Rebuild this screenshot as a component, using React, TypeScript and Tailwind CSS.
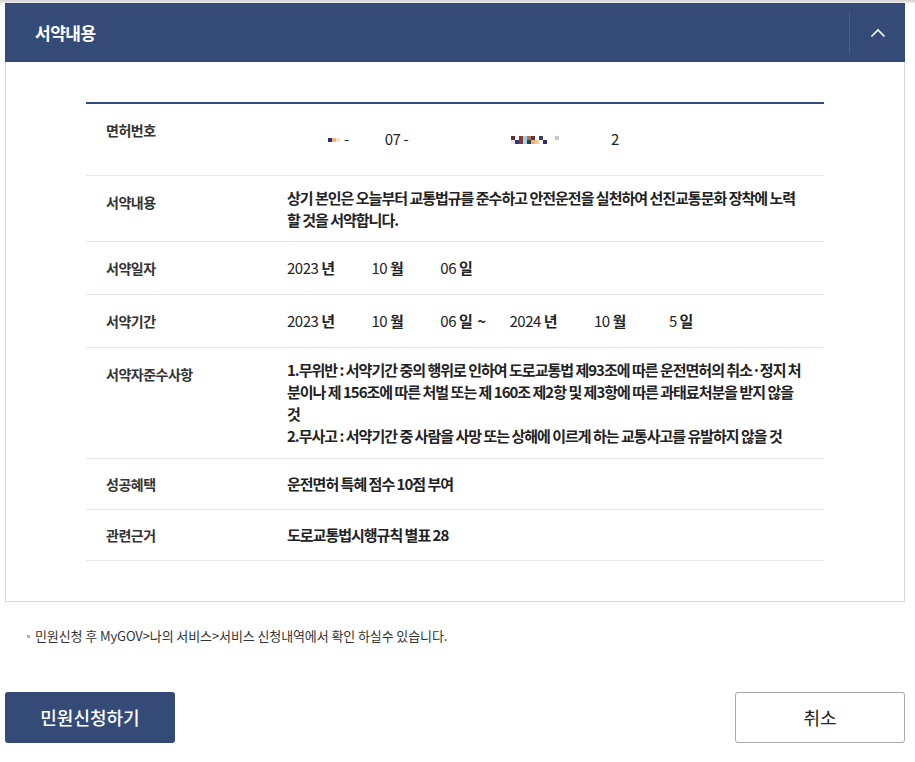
import type { ReactNode } from 'react';

const FONT = "font-['Noto_Sans_CJK_KR','Noto_Sans',sans-serif]";

// blurred (mosaic) parts of the licence number
const MOSAIC_A = [['#2b2f72', '#e9b77c', '#f5e2cc']];
const MOSAIC_B = [
  ['#5a2f3a', '#ffffff', '#8a3a2c', '#9fd0ea', '#a8764a', '#6b3040', '#ffffff', '#3a3f6a', '#ffffff', '#ffffff', '#ffffff', '#c8c8c8', '#ffffff', '#ffffff'],
  ['#f6e4e6', '#2b3b7a', '#8a3a2c', '#a9d8ee', '#2f3a4a', '#e3b36e', '#f0c890', '#ffffff', '#2b2f72', '#ffffff', '#ffffff', '#ffffff', '#ffffff', '#ffffff'],
];

function Mosaic({ cells }: { cells: string[][] }) {
  return (
    <span className="inline-flex flex-col">
      {cells.map((row, i) => (
        <span key={i} className="flex">
          {row.map((c, j) => (
            <span key={j} className="block h-[4px] w-[4px]" style={{ backgroundColor: c }} />
          ))}
        </span>
      ))}
    </span>
  );
}

function Label({ children }: { children: ReactNode }) {
  return (
    <div className="w-[201px] shrink-0 pl-[20px] text-[14px] font-bold leading-[30px] tracking-[-0.5px] text-[#333]">
      {children}
    </div>
  );
}

function Row({ label, children, pad = 'py-[11px]' }: { label: string; children: ReactNode; pad?: string }) {
  return (
    <div className={`flex border-b border-[#e6e6e6] ${pad}`}>
      <Label>{label}</Label>
      <div className="flex min-h-[30px] min-w-0 flex-1 flex-col justify-center pr-[18px] text-[15px] leading-[22px] tracking-[-1px] text-[#222]">
        {children}
      </div>
    </div>
  );
}

function DatePart({ num, unit, className }: { num: string; unit: string; className?: string }) {
  return (
    <span className={`whitespace-nowrap ${className ?? ''}`}>
      <span className="font-normal">{num}</span> <span className="font-bold">{unit}</span>
    </span>
  );
}

export default function App() {
  return (
    <div className={`${FONT} min-h-[762px] w-[915px] bg-white`}>
      <div className="h-[3px] bg-gradient-to-b from-[#d4d4d4] to-[#ececec]" />
      <div className="ml-[5px] w-[900px]">
        <div className="flex h-[59px] items-center bg-[#334b76]">
          <h2 className="flex-1 pl-[30px] text-[17px] font-bold tracking-[-0.5px] text-white">서약내용</h2>
          <div className="h-[41px] w-px bg-[#4b6088]" />
          <button type="button" aria-label="접기" className="flex h-full w-[55px] items-center justify-center">
            <svg width="16" height="10" viewBox="0 0 16 10" fill="none">
              <polyline points="1.5,8.5 8,2 14.5,8.5" stroke="#fff" strokeWidth="1.6" />
            </svg>
          </button>
        </div>

        <div className="border-x border-b border-[#d6d6d6] px-[80px] pt-[40px] pb-[40px]">
          <div className="border-t-2 border-[#334b76]">
            <div className="flex border-b border-[#e6e6e6] py-[11px]">
              <Label>면허번호</Label>
              <div className="flex h-[49px] flex-1 items-center text-[15px] tracking-[-0.5px] text-[#222]">
                <span className="ml-[41px] inline-flex items-center gap-[4px]">
                  <Mosaic cells={MOSAIC_A} />
                  <span>-</span>
                </span>
                <span className="ml-[36px] inline-flex items-center gap-[3px]">
                  <span>07</span>
                  <span>-</span>
                </span>
                <span className="ml-[103px] inline-flex">
                  <Mosaic cells={MOSAIC_B} />
                </span>
                <span className="ml-[44px]">2</span>
              </div>
            </div>

            <Row label="서약내용" pad="pt-[11px] pb-[10px]">
              <span className="font-bold">
                상기 본인은 오늘부터 교통법규를 준수하고 안전운전을 실천하여 선진교통문화 장착에 노력 할 것을 서약합니다.
              </span>
            </Row>

            <Row label="서약일자">
              <div className="flex tracking-[-0.5px]">
                <DatePart num="2023" unit="년" />
                <DatePart num="10" unit="월" className="ml-[37px]" />
                <DatePart num="06" unit="일" className="ml-[37px]" />
              </div>
            </Row>

            <Row label="서약기간">
              <div className="flex tracking-[-0.5px]">
                <DatePart num="2023" unit="년" />
                <DatePart num="10" unit="월" className="ml-[37px]" />
                <DatePart num="06" unit="일" className="ml-[37px]" />
                <span className="ml-[5px] font-bold">~</span>
                <DatePart num="2024" unit="년" className="ml-[24px]" />
                <DatePart num="10" unit="월" className="ml-[37px]" />
                <DatePart num="5" unit="일" className="ml-[43px]" />
              </div>
            </Row>

            <Row label="서약자준수사항">
              <p className="font-bold">
                1.무위반 : 서약기간 중의 행위로 인하여 도로교통법 제93조에 따른 운전면허의 취소·정지 처분이나 제 156조에 따른 처벌 또는 제 160조 제2항 및 제3항에 따른 과태료처분을 받지 않을 것
              </p>
              <p className="font-bold">2.무사고 : 서약기간 중 사람을 사망 또는 상해에 이르게 하는 교통사고를 유발하지 않을 것</p>
            </Row>

            <Row label="성공혜택" pad="py-[10px]">
              <span className="font-bold">운전면허 특혜 점수 10점 부여</span>
            </Row>

            <Row label="관련근거" pad="py-[10px]">
              <span className="font-bold">도로교통법시행규칙 별표 28</span>
            </Row>
          </div>
        </div>

        <p className="mt-[24px] flex items-center pl-[22px] text-[13px] leading-[20px] tracking-[-0.1px] text-[#333]">
          <span className="mr-[5px] inline-block h-[3px] w-[3px] bg-[#b5b5b5]" />
          민원신청 후 MyGOV&gt;나의 서비스&gt;서비스 신청내역에서 확인 하실수 있습니다.
        </p>

        <div className="mt-[46px] flex justify-between">
          <button type="button" className="h-[51px] w-[170px] rounded-[3px] bg-[#334b76] text-[18px] font-medium text-white">
            민원신청하기
          </button>
          <button type="button" className="h-[51px] w-[170px] rounded-[3px] border border-[#aaaaaa] bg-white text-[18px] text-[#222]">
            취소
          </button>
        </div>
      </div>
    </div>
  );
}
